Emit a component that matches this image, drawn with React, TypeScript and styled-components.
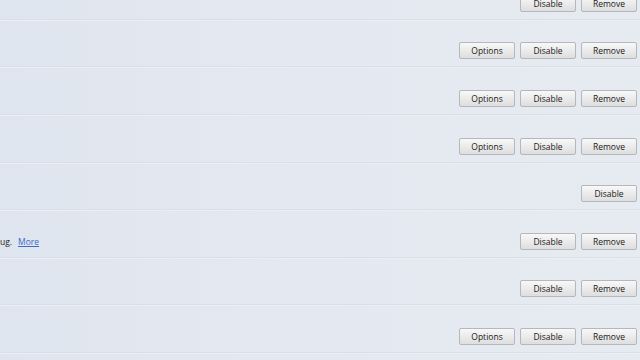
import React from "react";
import styled, { createGlobalStyle } from "styled-components";

const GlobalStyle = createGlobalStyle`
  html, body {
    margin: 0;
    padding: 0;
    width: 640px;
    height: 360px;
    overflow: hidden;
    background: #e2e7ef;
  }
`;

const Page = styled.div`
  width: 640px;
  height: 360px;
  overflow: hidden;
  background: linear-gradient(90deg, #dfe5ee 0%, #e4e9f1 45%, #e6ebf2 100%);
  font-family: "Open Sans", "Liberation Sans", sans-serif;
`;

const List = styled.div`
  display: flex;
  flex-direction: column;
  margin-top: -27.8px;
`;

const Row = styled.div`
  height: 47.6px;
  box-sizing: border-box;
  display: flex;
  align-items: flex-end;
  justify-content: space-between;
  padding: 0 3px 7px 0;
  border-bottom: 1px solid #d9dfe7;
  box-shadow: 0 1px 0 #ebeff5;
`;

const Note = styled.div`
  display: flex;
  align-items: center;
  gap: 6px;
  font-size: 8.5px;
  color: #1e1e1e;
  height: 17px;
`;

const MoreLink = styled.a`
  color: #3b6ac9;
  text-decoration: underline;
  cursor: pointer;
`;

const Buttons = styled.div`
  display: flex;
  gap: 5px;
  margin-left: auto;
`;

const Button = styled.button`
  width: 56px;
  height: 17px;
  box-sizing: border-box;
  padding: 0;
  border: 1px solid #b4b8bd;
  border-radius: 2px;
  background: linear-gradient(#f8f8f8, #ebebeb 50%, #dedede);
  font-family: "Open Sans", "Liberation Sans", sans-serif;
  font-size: 8.5px;
  color: #1a1a1a;
  line-height: 15px;
`;

type Item = { options?: boolean; disable?: boolean; remove?: boolean; note?: boolean };

const items: Item[] = [
  { disable: true, remove: true },
  { options: true, disable: true, remove: true },
  { options: true, disable: true, remove: true },
  { options: true, disable: true, remove: true },
  { disable: true },
  { disable: true, remove: true, note: true },
  { disable: true, remove: true },
  { options: true, disable: true, remove: true },
];

export default function App() {
  return (
    <Page>
      <GlobalStyle />
      <List>
        {items.map((it, i) => (
          <Row key={i}>
            {it.note && (
              <Note>
                <span>ug.</span>
                <MoreLink>More</MoreLink>
              </Note>
            )}
            <Buttons>
              {it.options && <Button>Options</Button>}
              {it.disable && <Button>Disable</Button>}
              {it.remove && <Button>Remove</Button>}
            </Buttons>
          </Row>
        ))}
      </List>
    </Page>
  );
}
